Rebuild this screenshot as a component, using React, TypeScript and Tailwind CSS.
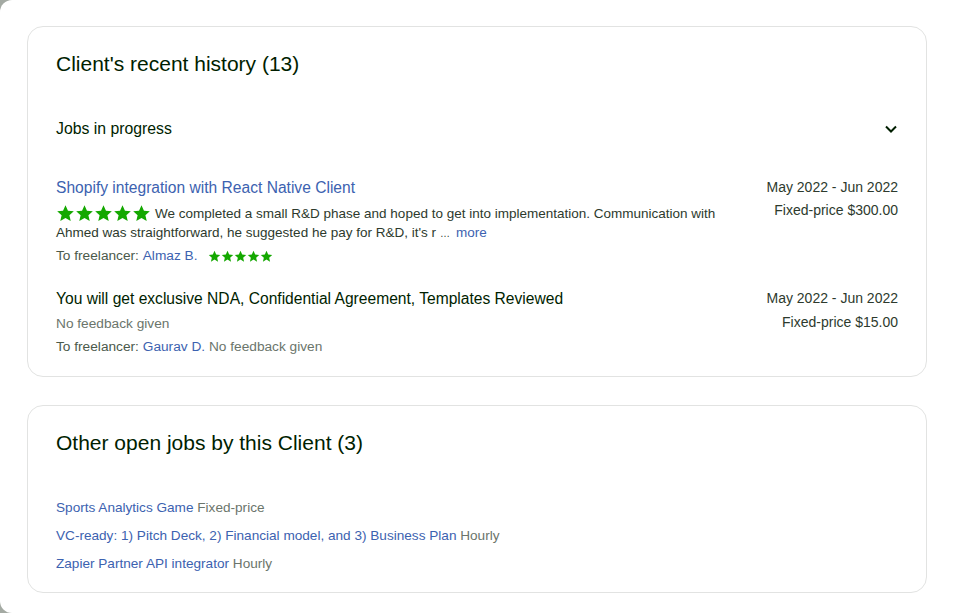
import React from "react";

const Star = ({ size }: { size: number }) => (
  <svg width={size} height={size} viewBox="0 0 24 24" className="shrink-0">
    <path
      d="M12 1.5l3.1 6.9 7.4.7-5.6 5 1.7 7.4L12 17.6l-6.6 3.9 1.7-7.4-5.6-5 7.4-.7z"
      fill="#14a800"
    />
  </svg>
);

const Stars = ({ size }: { size: number }) => (
  <span className="inline-flex items-center">
    {[0, 1, 2, 3, 4].map((i) => (
      <Star key={i} size={size} />
    ))}
  </span>
);

export default function App() {
  return (
    <div
      className="w-[955px] h-[613px] bg-[#a4aaa3] overflow-hidden"
      style={{ fontFamily: '"Liberation Sans", Arial, sans-serif' }}
    >
      <div className="w-full h-full bg-white rounded-l-[12px] pt-[26px] pl-[27px] pr-[28px]">
        {/* Card 1 */}
        <div className="border border-[#e2e3e2] rounded-[16px] pl-[28px] pr-[28px] pt-[24px] pb-[20px] h-[351px]">
          <h2 className="text-[21px] leading-[26px] text-[#001e00]">
            Client's recent history (13)
          </h2>
          <div className="flex items-center justify-between mt-[42px] h-[20px]">
            <span className="text-[15.8px] text-[#001e00]">Jobs in progress</span>
            <svg width="14" height="14" viewBox="0 0 14 14">
              <path
                d="M2 4.5l5 5 5-5"
                fill="none"
                stroke="#001e00"
                strokeWidth="2"
              />
            </svg>
          </div>

          {/* Job 1 */}
          <div className="flex justify-between mt-[39px]">
            <div className="w-[670px]">
              <div className="text-[15.6px] leading-[20px] text-[#3c62b0]">
                Shopify integration with React Native Client
              </div>
              <div className="text-[13.5px] leading-[19px] text-[#2d3a2d] mt-[6px]">
                <div className="flex items-center">
                  <span className="inline-flex mr-[4px]">
                    <Stars size={19} />
                  </span>
                  <span>
                    We completed a small R&amp;D phase and hoped to get into implementation. Communication with
                  </span>
                </div>
                <div className="flex items-baseline">
                  <span>Ahmed was straightforward, he suggested he pay for R&amp;D, it's r</span>
                  <span className="text-[10px] ml-[4px]">…</span>
                  <span className="text-[#3c62b0] ml-[6px]">more</span>
                </div>
              </div>
              <div className="flex items-center text-[13.7px] leading-[18px] mt-[4px] text-[#4b5a4b]">
                <span>To freelancer:&nbsp;</span>
                <span className="text-[#3c62b0]">Almaz B.</span>
                <span className="ml-[10px] inline-flex">
                  <Stars size={13} />
                </span>
              </div>
            </div>
            <div className="text-right text-[14px] text-[#2d3a2d] leading-[18px]">
              <div>May 2022 - Jun 2022</div>
              <div className="mt-[5px]">Fixed-price $300.00</div>
            </div>
          </div>

          {/* Job 2 */}
          <div className="flex justify-between mt-[24px]">
            <div>
              <div className="text-[15.6px] leading-[20px] text-[#001e00]">
                You will get exclusive NDA, Confidential Agreement, Templates Reviewed
              </div>
              <div className="text-[13.7px] leading-[18px] text-[#6b756b] mt-[6px]">
                No feedback given
              </div>
              <div className="text-[13.7px] leading-[18px] text-[#4b5a4b] mt-[5px]">
                To freelancer: <span className="text-[#3c62b0]">Gaurav D.</span>{" "}
                <span className="text-[#6b756b]">No feedback given</span>
              </div>
            </div>
            <div className="text-right text-[14px] text-[#2d3a2d] leading-[18px]">
              <div>May 2022 - Jun 2022</div>
              <div className="mt-[6px]">Fixed-price $15.00</div>
            </div>
          </div>
        </div>

        {/* Card 2 */}
        <div className="border border-[#e2e3e2] rounded-[16px] pl-[28px] pr-[28px] pt-[24px] mt-[28px] h-[188px]">
          <h2 className="text-[21px] leading-[26px] text-[#001e00]">
            Other open jobs by this Client (3)
          </h2>
          <div className="mt-[43px] flex flex-col gap-[10px] text-[13.6px] leading-[18px]">
            <div>
              <span className="text-[#3c62b0]">Sports Analytics Game</span>{" "}
              <span className="text-[#6b756b]">Fixed-price</span>
            </div>
            <div>
              <span className="text-[#3c62b0]">
                VC-ready: 1) Pitch Deck, 2) Financial model, and 3) Business Plan
              </span>{" "}
              <span className="text-[#6b756b]">Hourly</span>
            </div>
            <div>
              <span className="text-[#3c62b0]">Zapier Partner API integrator</span>{" "}
              <span className="text-[#6b756b]">Hourly</span>
            </div>
          </div>
        </div>
      </div>
    </div>
  );
}
